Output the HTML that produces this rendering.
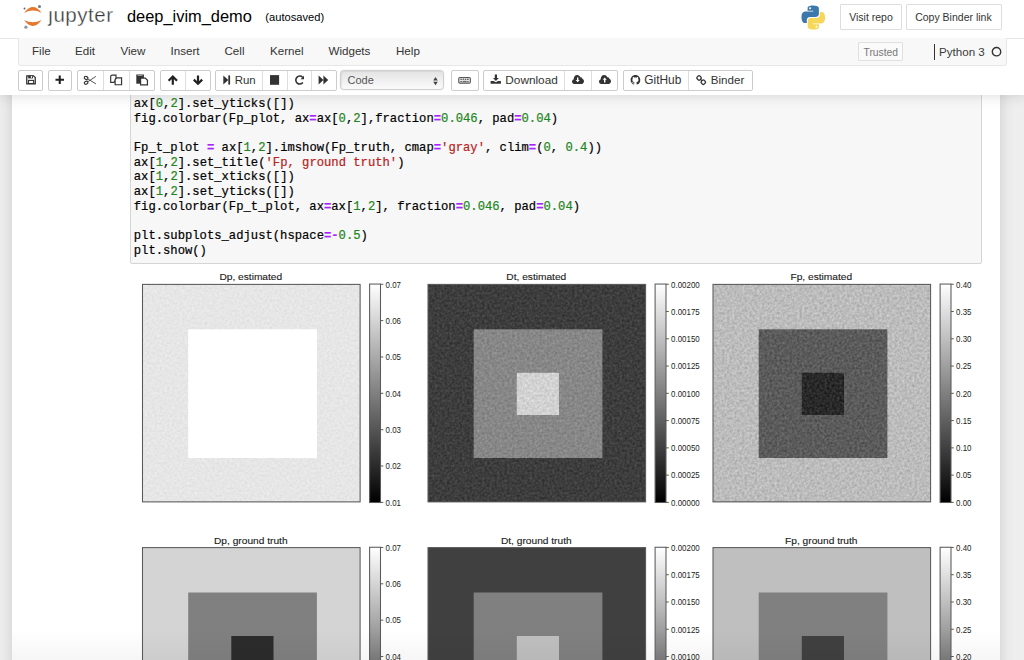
<!DOCTYPE html>
<html><head><meta charset="utf-8">
<style>
html,body{margin:0;padding:0}
body{width:1024px;height:660px;overflow:hidden;background:#fff;position:relative;font-family:"Liberation Sans",sans-serif;color:#333}
.a{position:absolute}
.t{position:absolute;white-space:pre;line-height:1}
.btn{position:absolute;box-sizing:border-box;border:1px solid #ccc;background:#fff;border-radius:2px;height:21px;top:70px}
.dv{position:absolute;top:0;bottom:0;width:1px;background:#ddd}
.ic{position:absolute;overflow:visible}
.code{position:absolute;left:133.8px;-webkit-text-stroke:0.2px currentColor;font-family:"Liberation Mono",monospace;font-size:12.2px;white-space:pre;color:#000;line-height:14.7px}
.n{color:#1d861d}.o{color:#a2f;font-weight:bold}.s{color:#ba2121}
.fr{position:absolute;box-sizing:border-box;border:1px solid #555;width:218px;height:218px}
.cb{position:absolute;box-sizing:border-box;border:1px solid #555;width:11.5px;height:218.6px;background:linear-gradient(#fff,#000)}
.ttl{position:absolute;font-size:10px;color:#111;white-space:pre;line-height:1;transform:translateX(-50%)}
.tk{position:absolute;font-size:8.3px;color:#222;white-space:pre;line-height:1}
.tm{position:absolute;width:3px;height:1px;background:#555}
</style></head><body>

<!-- ===== NOTEBOOK AREA ===== -->
<div class="a" style="left:0;top:95px;width:1024px;height:565px;background:#eee;overflow:hidden">
  <div class="a" style="left:12px;top:-20px;width:988px;height:700px;background:#fff;box-shadow:0 0 12px 1px rgba(87,87,87,0.2)"></div>
</div>

<!-- code cell -->
<div class="a" style="left:130px;top:60px;width:852px;height:203.5px;box-sizing:border-box;border:1px solid #d5d5d5;border-radius:2px;background:#f7f7f7"></div>

<div class="code" style="top:96.8px">ax[<span class="n">0</span>,<span class="n">2</span>].set_yticks([])
fig.colorbar(Fp_plot, ax<span class="o">=</span>ax[<span class="n">0</span>,<span class="n">2</span>],fraction<span class="o">=</span><span class="n">0.046</span>, pad<span class="o">=</span><span class="n">0.04</span>)

Fp_t_plot <span class="o">=</span> ax[<span class="n">1</span>,<span class="n">2</span>].imshow(Fp_truth, cmap<span class="o">=</span><span class="s">'gray'</span>, clim<span class="o">=</span>(<span class="n">0</span>, <span class="n">0.4</span>))
ax[<span class="n">1</span>,<span class="n">2</span>].set_title(<span class="s">'Fp, ground truth'</span>)
ax[<span class="n">1</span>,<span class="n">2</span>].set_xticks([])
ax[<span class="n">1</span>,<span class="n">2</span>].set_yticks([])
fig.colorbar(Fp_t_plot, ax<span class="o">=</span>ax[<span class="n">1</span>,<span class="n">2</span>], fraction<span class="o">=</span><span class="n">0.046</span>, pad<span class="o">=</span><span class="n">0.04</span>)

plt.subplots_adjust(hspace<span class="o">=-</span><span class="n">0.5</span>)
plt.show()</div>
<div class="a" style="left:0;top:0;width:1024px;height:95px;background:#fff;box-shadow:0 0 12px 1px rgba(87,87,87,0.2)">
<!-- ===== HEADER ===== -->
<svg class="ic" style="left:0;top:0" width="50" height="35" viewBox="0 0 50 35">
  <path d="M24.1 12.9Q32.85 1.1 41.6 12.9Q32.85 8.1 24.1 12.9Z" fill="#e8772e"/>
  <path d="M24.1 20Q32.85 31.8 41.6 20Q32.85 24.4 24.1 20Z" fill="#e8772e"/>
  <circle cx="39.5" cy="6.5" r="1.5" fill="#767677"/>
  <circle cx="24.5" cy="8.6" r="1.0" fill="#616262"/>
  <circle cx="25.9" cy="27.2" r="1.6" fill="#989798"/>
</svg>
<div class="t" style="left:48.3px;top:5px;font-size:20.5px;color:#3a3a3a;letter-spacing:0.53px;-webkit-text-stroke:0.3px #fff">ȷupyter</div>
<div class="t" style="left:127px;top:8.2px;font-size:16.4px;color:#000">deep_ivim_demo</div>
<div class="t" style="left:265.3px;top:12.4px;font-size:11.15px;color:#000">(autosaved)</div>

<svg class="ic" style="left:801px;top:5px" width="25" height="25" viewBox="0 0 25 25">
  <path d="M12.2 0.5c-6 0-5.6 2.6-5.6 2.6v2.7h5.7v0.8H4.3S0.5 6.2 0.5 12.2s3.3 5.8 3.3 5.8h2v-2.8s-0.1-3.3 3.3-3.3h5.6s3.2 0.1 3.2-3.1V3.6S18.4 0.5 12.2 0.5zM9.1 2.3c0.6 0 1 0.5 1 1s-0.5 1-1 1-1-0.5-1-1 0.5-1 1-1z" fill="#3d78ac"/>
  <path d="M12.4 24.5c6 0 5.6-2.6 5.6-2.6v-2.7h-5.7v-0.8h8S24.1 18.8 24.1 12.8s-3.3-5.8-3.3-5.8h-2v2.8s0.1 3.3-3.3 3.3H9.9s-3.2-0.1-3.2 3.1v5.2S6.2 24.5 12.4 24.5zM15.5 22.7c-0.6 0-1-0.5-1-1s0.5-1 1-1 1 0.5 1 1-0.5 1-1 1z" fill="#f7d75a"/>
</svg>
<div class="a" style="left:840px;top:4px;width:62px;height:26px;box-sizing:border-box;border:1px solid #ddd;border-radius:1px;background:#fff"></div>
<div class="t" style="left:849.2px;top:11.7px;font-size:10.5px;color:#333">Visit repo</div>
<div class="a" style="left:906px;top:4px;width:96px;height:26px;box-sizing:border-box;border:1px solid #ddd;border-radius:1px;background:#fff"></div>
<div class="t" style="left:915.2px;top:11.7px;font-size:10.5px;color:#333">Copy Binder link</div>

<!-- ===== MENUBAR ===== -->
<div class="a" style="left:0;top:38px;width:1024px;height:1px;background:#e7e7e7"></div>
<div class="a" style="left:18px;top:38px;width:989px;height:27.5px;box-sizing:border-box;border:1px solid #e7e7e7;border-top:none;background:#f8f8f8;border-radius:0 0 3px 3px"></div>
<div class="t" style="left:32px;top:45.4px;font-size:11.6px;color:#333">File</div>
<div class="t" style="left:75px;top:45.4px;font-size:11.6px;color:#333">Edit</div>
<div class="t" style="left:120.5px;top:45.4px;font-size:11.6px;color:#333">View</div>
<div class="t" style="left:170.5px;top:45.4px;font-size:11.6px;color:#333">Insert</div>
<div class="t" style="left:224.5px;top:45.4px;font-size:11.6px;color:#333">Cell</div>
<div class="t" style="left:270px;top:45.4px;font-size:11.6px;color:#333">Kernel</div>
<div class="t" style="left:328.5px;top:45.4px;font-size:11.6px;color:#333">Widgets</div>
<div class="t" style="left:396px;top:45.4px;font-size:11.6px;color:#333">Help</div>
<div class="a" style="left:858px;top:42.4px;width:45px;height:19px;box-sizing:border-box;border:1px solid #e0e0e0;border-radius:1px;background:#fafafa"></div>
<div class="t" style="left:863.5px;top:47.5px;font-size:10.3px;color:#777">Trusted</div>
<div class="a" style="left:934px;top:44px;width:1.2px;height:15.5px;background:#333"></div>
<div class="t" style="left:939px;top:45.6px;font-size:11.6px;color:#3a3a3a">Python 3</div>
<svg class="ic" style="left:990px;top:46px" width="12" height="12"><circle cx="6.5" cy="5.7" r="4.2" fill="none" stroke="#333" stroke-width="1.4"/></svg>

<!-- ===== TOOLBAR ===== -->
<div class="btn" style="left:18px;width:25px"></div>
<div class="btn" style="left:48px;width:24px"></div>
<div class="btn" style="left:77px;width:78px"><div class="dv" style="left:25px"></div><div class="dv" style="left:51px"></div></div>
<div class="btn" style="left:160px;width:51px"><div class="dv" style="left:24px"></div></div>
<div class="btn" style="left:215px;width:122px"><div class="dv" style="left:46px"></div><div class="dv" style="left:71px"></div><div class="dv" style="left:95px"></div></div>
<div class="a" style="left:340px;top:70.3px;width:103.5px;height:20.2px;box-sizing:border-box;border:1px solid #d0d0d0;border-radius:4px;background:linear-gradient(#e4e4e4,#fafafa);box-shadow:0 0 1px rgba(0,0,0,0.25),inset 1px 1px 1px rgba(0,0,0,0.06)"></div>
<div class="t" style="left:347.5px;top:75px;font-size:11px;color:#555">Code</div>
<svg class="ic" style="left:431.5px;top:75.5px" width="8" height="11"><path d="M1.2 4.4 L3.5 1 L5.8 4.4Z M1.2 5.8 L3.5 9.3 L5.8 5.8Z" fill="#444"/></svg>
<div class="btn" style="left:451px;width:28px"></div>
<div class="btn" style="left:483.3px;width:135px"><div class="dv" style="left:80px"></div><div class="dv" style="left:107px"></div></div>
<div class="btn" style="left:623px;width:130px"><div class="dv" style="left:64px"></div></div>

<!-- icons -->
<svg class="ic" style="left:0;top:0" width="760" height="95" viewBox="0 0 760 95">
<g fill="none" stroke="#333">
  <path d="M26.75 75.85H33.5L35.25 77.6V83.95H26.75Z" stroke-width="1.3"/>
  <rect x="28.5" y="80.4" width="5.1" height="3.1" fill="#fff" stroke-width="1.1"/>
</g>
<rect x="28.2" y="75.5" width="4.8" height="2.9" fill="#333"/><rect x="30.9" y="76.1" width="1.2" height="1.7" fill="#fff"/>
<path d="M59.75 75.4V84M55.5 79.7H64" stroke="#222" stroke-width="2.1"/>
<g fill="none" stroke="#333" stroke-width="1.15">
  <ellipse cx="86.1" cy="77.9" rx="1.9" ry="1.45" transform="rotate(28 86.1 77.9)"/>
  <ellipse cx="86.1" cy="82.7" rx="1.9" ry="1.45" transform="rotate(-28 86.1 82.7)"/>
</g>
<path d="M87.9 78.9L95.9 83.9M87.9 81.7L95.9 76.4" stroke="#555" stroke-width="1"/>
<path d="M112.1 75.1H116V79.6L113.9 82.3H110.7V76.5Q110.7 75.1 112.1 75.1Z" fill="#fff" stroke="#333" stroke-width="1.15"/>
<path d="M116.8 77.9H121.55V84.75H115.1V79.6Z" fill="#fff" stroke="#333" stroke-width="1.2"/>
<rect x="136.3" y="74.5" width="7.6" height="9.2" fill="#333"/><rect x="137.6" y="74.9" width="4.9" height="1.1" fill="#999"/>
<path d="M140.6 78.1H145.3L147.45 80.25V84.9H140.6Z" fill="#fff" stroke="#333" stroke-width="1.2"/>
<path d="M172.8 84.8V77.6M168.6 80.7L172.8 76.5L177 80.7" fill="none" stroke="#222" stroke-width="2.2"/>
<path d="M198 75.5V82.7M193.8 79.6L198 83.8L202.2 79.6" fill="none" stroke="#222" stroke-width="2.2"/>
<path d="M223.3 75.4L228.4 80L223.3 84.6Z" fill="#333"/><rect x="228.3" y="75.4" width="1.8" height="9.2" fill="#333"/>
<rect x="270" y="75.1" width="9.1" height="9.7" fill="#333"/>
<path d="M302.6 77.2A4 4 0 1 0 302.9 82.6" fill="none" stroke="#333" stroke-width="1.6"/>
<path d="M304 75.7V79.2H300.5Z" fill="#333"/>
<path d="M318.6 75.5L323.4 80L318.6 84.4ZM323.4 75.5L328.2 80L323.4 84.4Z" fill="#333"/>
<rect x="458.8" y="77.5" width="11.5" height="5.7" rx="1.1" fill="none" stroke="#555" stroke-width="1.2"/>
<path d="M460.3 78.6h1.6v1.5h-1.6zM462.5 78.6h1.6v1.5h-1.6zM464.7 78.6h1.6v1.5h-1.6zM466.9 78.6h1.8v1.5h-1.8zM460.3 80.7h1.6v1.5h-1.6zM462.5 80.7h4.2v1.5h-4.2zM467.2 80.7h1.5v1.5h-1.5z" fill="#666"/>
<path d="M494.8 74.4H497V77.9H498.8L495.9 81L493 77.9H494.8Z" fill="#333"/>
<path d="M490.6 81H493.8L495.9 82.2L498 81H500.9V83.8H490.6Z" fill="#333"/>
<path d="M574.3 83.9C572.9 83.9 572 83 572 81.6C572 80.5 572.7 79.6 573.6 79.4C573.7 77.1 575.1 75.1 577.1 75.1C578.6 75.1 579.7 76 580.2 77.2C581 76.9 582.3 77.6 582.5 78.9C583.5 79.2 584 80.3 584 81.3C584 82.8 583 83.9 581.6 83.9Z" fill="#333"/>
<path d="M577 77.4H578.4V80H579.7L577.7 82.3L575.7 80H577Z" fill="#fff"/>
<path d="M601.3 83.9C599.9 83.9 599 83 599 81.6C599 80.5 599.7 79.6 600.6 79.4C600.7 77.1 602.1 75.1 604.1 75.1C605.6 75.1 606.7 76 607.2 77.2C608 76.9 609.3 77.6 609.5 78.9C610.5 79.2 611 80.3 611 81.3C611 82.8 610 83.9 608.6 83.9Z" fill="#333"/>
<path d="M604 82.4H605.4V79.8H606.7L604.7 77.4L602.7 79.8H604Z" fill="#fff"/>
<g transform="translate(630.6 75.1) scale(0.605)"><path d="M8 0C3.58 0 0 3.58 0 8c0 3.54 2.29 6.53 5.47 7.59.4.07.55-.17.55-.38 0-.19-.01-.82-.01-1.49-2.01.37-2.53-.49-2.69-.94-.09-.23-.48-.94-.82-1.13-.28-.15-.68-.52-.01-.53.63-.01 1.08.58 1.23.82.72 1.21 1.87.87 2.33.66.07-.52.28-.87.51-1.07-1.78-.2-3.64-.89-3.64-3.95 0-.87.31-1.59.82-2.15-.08-.2-.36-1.02.08-2.12 0 0 .67-.21 2.2.82.64-.18 1.32-.27 2-.27.68 0 1.36.09 2 .27 1.53-1.04 2.2-.82 2.2-.82.44 1.1.16 1.92.08 2.12.51.56.82 1.27.82 2.15 0 3.07-1.87 3.75-3.65 3.95.29.25.54.73.54 1.48 0 1.07-.01 1.93-.01 2.2 0 .21.15.46.55.38A8.013 8.013 0 0016 8c0-4.42-3.58-8-8-8z" fill="#333"/></g>
<g fill="none" stroke="#333" stroke-width="1.3">
  <rect x="697.1" y="76" width="3.9" height="3.9" rx="1.2" transform="rotate(45 699.05 77.95)"/>
  <rect x="701.35" y="80.25" width="3.9" height="3.9" rx="1.2" transform="rotate(45 703.3 82.2)"/>
  <path d="M700.4 79.3L702 80.9"/>
</g>
</svg>
<div class="t" style="left:234.8px;top:75px;font-size:11.4px;color:#333">Run</div>
<div class="t" style="left:505.3px;top:74.8px;font-size:11.8px;color:#333">Download</div>
<div class="t" style="left:644.3px;top:74.8px;font-size:11.9px;color:#333">GitHub</div>
<div class="t" style="left:710.8px;top:74.2px;font-size:11.6px;color:#333">Binder</div>


</div>
<div id="out"><svg class="a" style="left:0;top:0" width="1024" height="660" viewBox="0 0 1024 660"><defs><linearGradient id="g" x1="0" y1="0" x2="0" y2="1"><stop offset="0" stop-color="#fff"/><stop offset="1" stop-color="#000"/></linearGradient><filter id="nz0" x="0" y="0" width="1" height="1" color-interpolation-filters="sRGB"><feTurbulence type="fractalNoise" baseFrequency="0.4" numOctaves="2" seed="7" result="t"/><feColorMatrix in="t" type="matrix" values="1 0 0 0 0  1 0 0 0 0  1 0 0 0 0  0 0 0 0 1" result="g"/><feComposite in="SourceGraphic" in2="g" operator="arithmetic" k1="0" k2="1" k3="0.09" k4="-0.045"/></filter><filter id="nz1" x="0" y="0" width="1" height="1" color-interpolation-filters="sRGB"><feTurbulence type="fractalNoise" baseFrequency="0.4" numOctaves="2" seed="8" result="t"/><feColorMatrix in="t" type="matrix" values="1 0 0 0 0  1 0 0 0 0  1 0 0 0 0  0 0 0 0 1" result="g"/><feComposite in="SourceGraphic" in2="g" operator="arithmetic" k1="0" k2="1" k3="0.2" k4="-0.1"/></filter><filter id="nz2" x="0" y="0" width="1" height="1" color-interpolation-filters="sRGB"><feTurbulence type="fractalNoise" baseFrequency="0.4" numOctaves="2" seed="9" result="t"/><feColorMatrix in="t" type="matrix" values="1 0 0 0 0  1 0 0 0 0  1 0 0 0 0  0 0 0 0 1" result="g"/><feComposite in="SourceGraphic" in2="g" operator="arithmetic" k1="0" k2="1" k3="0.24" k4="-0.12"/></filter></defs>
<g font-family="Liberation Sans" fill="#222">
<g filter="url(#nz0)"><rect x="142.5" y="284.4" width="217.60" height="217.50" fill="#e6e6e6"/>
</g>
<rect x="188.2" y="329.3" width="128.70" height="128.70" fill="#ffffff"/>
<rect x="142.5" y="284.4" width="217.60" height="217.50" fill="none" stroke="#5a5a5a" stroke-width="1.05"/>
<text x="250.8" y="280.5" font-size="9.8" text-anchor="middle" fill="#1a1a1a" stroke="#1a1a1a" stroke-width="0.12" transform="translate(250.8 0) scale(1.04 1) translate(-250.8 0)">Dp, estimated</text>
<rect x="369.6" y="284.05" width="10.90" height="218.45" fill="url(#g)" stroke="#5a5a5a" stroke-width="1.05"/>
<path d="M380.5 284.25H383.3" stroke="#5a5a5a" stroke-width="1"/>
<text x="385.6" y="287.55" font-size="9.2" transform="translate(385.6 0) scale(0.86 1) translate(-385.6 0)">0.07</text>
<path d="M380.5 320.61H383.3" stroke="#5a5a5a" stroke-width="1"/>
<text x="385.6" y="323.91" font-size="9.2" transform="translate(385.6 0) scale(0.86 1) translate(-385.6 0)">0.06</text>
<path d="M380.5 356.97H383.3" stroke="#5a5a5a" stroke-width="1"/>
<text x="385.6" y="360.27" font-size="9.2" transform="translate(385.6 0) scale(0.86 1) translate(-385.6 0)">0.05</text>
<path d="M380.5 393.32H383.3" stroke="#5a5a5a" stroke-width="1"/>
<text x="385.6" y="396.62" font-size="9.2" transform="translate(385.6 0) scale(0.86 1) translate(-385.6 0)">0.04</text>
<path d="M380.5 429.68H383.3" stroke="#5a5a5a" stroke-width="1"/>
<text x="385.6" y="432.98" font-size="9.2" transform="translate(385.6 0) scale(0.86 1) translate(-385.6 0)">0.03</text>
<path d="M380.5 466.04H383.3" stroke="#5a5a5a" stroke-width="1"/>
<text x="385.6" y="469.34" font-size="9.2" transform="translate(385.6 0) scale(0.86 1) translate(-385.6 0)">0.02</text>
<path d="M380.5 502.40H383.3" stroke="#5a5a5a" stroke-width="1"/>
<text x="385.6" y="505.70" font-size="9.2" transform="translate(385.6 0) scale(0.86 1) translate(-385.6 0)">0.01</text>
<g filter="url(#nz1)"><rect x="428.0" y="284.4" width="217.60" height="217.50" fill="#3d3d3d"/>
<rect x="473.7" y="329.3" width="128.70" height="128.70" fill="#878787"/>
<rect x="516.8" y="372.8" width="42.20" height="42.20" fill="#d2d2d2"/>
</g>
<rect x="428.0" y="284.4" width="217.60" height="217.50" fill="none" stroke="#5a5a5a" stroke-width="1.05"/>
<text x="536.3" y="280.5" font-size="9.8" text-anchor="middle" fill="#1a1a1a" stroke="#1a1a1a" stroke-width="0.12" transform="translate(536.3 0) scale(1.04 1) translate(-536.3 0)">Dt, estimated</text>
<rect x="655.1" y="284.05" width="10.90" height="218.45" fill="url(#g)" stroke="#5a5a5a" stroke-width="1.05"/>
<path d="M666.0 284.25H668.8" stroke="#5a5a5a" stroke-width="1"/>
<text x="671.1" y="287.55" font-size="9.2" transform="translate(671.1 0) scale(0.86 1) translate(-671.1 0)">0.00200</text>
<path d="M666.0 311.52H668.8" stroke="#5a5a5a" stroke-width="1"/>
<text x="671.1" y="314.82" font-size="9.2" transform="translate(671.1 0) scale(0.86 1) translate(-671.1 0)">0.00175</text>
<path d="M666.0 338.79H668.8" stroke="#5a5a5a" stroke-width="1"/>
<text x="671.1" y="342.09" font-size="9.2" transform="translate(671.1 0) scale(0.86 1) translate(-671.1 0)">0.00150</text>
<path d="M666.0 366.06H668.8" stroke="#5a5a5a" stroke-width="1"/>
<text x="671.1" y="369.36" font-size="9.2" transform="translate(671.1 0) scale(0.86 1) translate(-671.1 0)">0.00125</text>
<path d="M666.0 393.32H668.8" stroke="#5a5a5a" stroke-width="1"/>
<text x="671.1" y="396.62" font-size="9.2" transform="translate(671.1 0) scale(0.86 1) translate(-671.1 0)">0.00100</text>
<path d="M666.0 420.59H668.8" stroke="#5a5a5a" stroke-width="1"/>
<text x="671.1" y="423.89" font-size="9.2" transform="translate(671.1 0) scale(0.86 1) translate(-671.1 0)">0.00075</text>
<path d="M666.0 447.86H668.8" stroke="#5a5a5a" stroke-width="1"/>
<text x="671.1" y="451.16" font-size="9.2" transform="translate(671.1 0) scale(0.86 1) translate(-671.1 0)">0.00050</text>
<path d="M666.0 475.13H668.8" stroke="#5a5a5a" stroke-width="1"/>
<text x="671.1" y="478.43" font-size="9.2" transform="translate(671.1 0) scale(0.86 1) translate(-671.1 0)">0.00025</text>
<path d="M666.0 502.40H668.8" stroke="#5a5a5a" stroke-width="1"/>
<text x="671.1" y="505.70" font-size="9.2" transform="translate(671.1 0) scale(0.86 1) translate(-671.1 0)">0.00000</text>
<g filter="url(#nz2)"><rect x="713.0" y="284.4" width="217.60" height="217.50" fill="#bcbcbc"/>
<rect x="758.7" y="329.3" width="128.70" height="128.70" fill="#5b5b5b"/>
<rect x="801.8" y="372.8" width="42.20" height="42.20" fill="#292929"/>
</g>
<rect x="713.0" y="284.4" width="217.60" height="217.50" fill="none" stroke="#5a5a5a" stroke-width="1.05"/>
<text x="821.3" y="280.5" font-size="9.8" text-anchor="middle" fill="#1a1a1a" stroke="#1a1a1a" stroke-width="0.12" transform="translate(821.3 0) scale(1.04 1) translate(-821.3 0)">Fp, estimated</text>
<rect x="940.1" y="284.05" width="10.90" height="218.45" fill="url(#g)" stroke="#5a5a5a" stroke-width="1.05"/>
<path d="M951.0 284.25H953.8" stroke="#5a5a5a" stroke-width="1"/>
<text x="956.1" y="287.55" font-size="9.2" transform="translate(956.1 0) scale(0.86 1) translate(-956.1 0)">0.40</text>
<path d="M951.0 311.52H953.8" stroke="#5a5a5a" stroke-width="1"/>
<text x="956.1" y="314.82" font-size="9.2" transform="translate(956.1 0) scale(0.86 1) translate(-956.1 0)">0.35</text>
<path d="M951.0 338.79H953.8" stroke="#5a5a5a" stroke-width="1"/>
<text x="956.1" y="342.09" font-size="9.2" transform="translate(956.1 0) scale(0.86 1) translate(-956.1 0)">0.30</text>
<path d="M951.0 366.06H953.8" stroke="#5a5a5a" stroke-width="1"/>
<text x="956.1" y="369.36" font-size="9.2" transform="translate(956.1 0) scale(0.86 1) translate(-956.1 0)">0.25</text>
<path d="M951.0 393.32H953.8" stroke="#5a5a5a" stroke-width="1"/>
<text x="956.1" y="396.62" font-size="9.2" transform="translate(956.1 0) scale(0.86 1) translate(-956.1 0)">0.20</text>
<path d="M951.0 420.59H953.8" stroke="#5a5a5a" stroke-width="1"/>
<text x="956.1" y="423.89" font-size="9.2" transform="translate(956.1 0) scale(0.86 1) translate(-956.1 0)">0.15</text>
<path d="M951.0 447.86H953.8" stroke="#5a5a5a" stroke-width="1"/>
<text x="956.1" y="451.16" font-size="9.2" transform="translate(956.1 0) scale(0.86 1) translate(-956.1 0)">0.10</text>
<path d="M951.0 475.13H953.8" stroke="#5a5a5a" stroke-width="1"/>
<text x="956.1" y="478.43" font-size="9.2" transform="translate(956.1 0) scale(0.86 1) translate(-956.1 0)">0.05</text>
<path d="M951.0 502.40H953.8" stroke="#5a5a5a" stroke-width="1"/>
<text x="956.1" y="505.70" font-size="9.2" transform="translate(956.1 0) scale(0.86 1) translate(-956.1 0)">0.00</text>
<g><rect x="142.5" y="547.6" width="217.60" height="217.50" fill="#d4d4d4"/>
<rect x="188.2" y="592.5" width="128.70" height="128.70" fill="#808080"/>
<rect x="231.3" y="636.0" width="42.20" height="42.20" fill="#2b2b2b"/>
</g>
<rect x="142.5" y="547.6" width="217.60" height="217.50" fill="none" stroke="#5a5a5a" stroke-width="1.05"/>
<text x="250.8" y="543.7" font-size="9.8" text-anchor="middle" fill="#1a1a1a" stroke="#1a1a1a" stroke-width="0.12" transform="translate(250.8 0) scale(1.04 1) translate(-250.8 0)">Dp, ground truth</text>
<rect x="369.6" y="547.25" width="10.90" height="218.45" fill="url(#g)" stroke="#5a5a5a" stroke-width="1.05"/>
<path d="M380.5 547.45H383.3" stroke="#5a5a5a" stroke-width="1"/>
<text x="385.6" y="550.75" font-size="9.2" transform="translate(385.6 0) scale(0.86 1) translate(-385.6 0)">0.07</text>
<path d="M380.5 583.81H383.3" stroke="#5a5a5a" stroke-width="1"/>
<text x="385.6" y="587.11" font-size="9.2" transform="translate(385.6 0) scale(0.86 1) translate(-385.6 0)">0.06</text>
<path d="M380.5 620.17H383.3" stroke="#5a5a5a" stroke-width="1"/>
<text x="385.6" y="623.47" font-size="9.2" transform="translate(385.6 0) scale(0.86 1) translate(-385.6 0)">0.05</text>
<path d="M380.5 656.52H383.3" stroke="#5a5a5a" stroke-width="1"/>
<text x="385.6" y="659.83" font-size="9.2" transform="translate(385.6 0) scale(0.86 1) translate(-385.6 0)">0.04</text>
<path d="M380.5 692.88H383.3" stroke="#5a5a5a" stroke-width="1"/>
<text x="385.6" y="696.18" font-size="9.2" transform="translate(385.6 0) scale(0.86 1) translate(-385.6 0)">0.03</text>
<path d="M380.5 729.24H383.3" stroke="#5a5a5a" stroke-width="1"/>
<text x="385.6" y="732.54" font-size="9.2" transform="translate(385.6 0) scale(0.86 1) translate(-385.6 0)">0.02</text>
<path d="M380.5 765.60H383.3" stroke="#5a5a5a" stroke-width="1"/>
<text x="385.6" y="768.90" font-size="9.2" transform="translate(385.6 0) scale(0.86 1) translate(-385.6 0)">0.01</text>
<g><rect x="428.0" y="547.6" width="217.60" height="217.50" fill="#404040"/>
<rect x="473.7" y="592.5" width="128.70" height="128.70" fill="#808080"/>
<rect x="516.8" y="636.0" width="42.20" height="42.20" fill="#bfbfbf"/>
</g>
<rect x="428.0" y="547.6" width="217.60" height="217.50" fill="none" stroke="#5a5a5a" stroke-width="1.05"/>
<text x="536.3" y="543.7" font-size="9.8" text-anchor="middle" fill="#1a1a1a" stroke="#1a1a1a" stroke-width="0.12" transform="translate(536.3 0) scale(1.04 1) translate(-536.3 0)">Dt, ground truth</text>
<rect x="655.1" y="547.25" width="10.90" height="218.45" fill="url(#g)" stroke="#5a5a5a" stroke-width="1.05"/>
<path d="M666.0 547.45H668.8" stroke="#5a5a5a" stroke-width="1"/>
<text x="671.1" y="550.75" font-size="9.2" transform="translate(671.1 0) scale(0.86 1) translate(-671.1 0)">0.00200</text>
<path d="M666.0 574.72H668.8" stroke="#5a5a5a" stroke-width="1"/>
<text x="671.1" y="578.02" font-size="9.2" transform="translate(671.1 0) scale(0.86 1) translate(-671.1 0)">0.00175</text>
<path d="M666.0 601.99H668.8" stroke="#5a5a5a" stroke-width="1"/>
<text x="671.1" y="605.29" font-size="9.2" transform="translate(671.1 0) scale(0.86 1) translate(-671.1 0)">0.00150</text>
<path d="M666.0 629.26H668.8" stroke="#5a5a5a" stroke-width="1"/>
<text x="671.1" y="632.56" font-size="9.2" transform="translate(671.1 0) scale(0.86 1) translate(-671.1 0)">0.00125</text>
<path d="M666.0 656.52H668.8" stroke="#5a5a5a" stroke-width="1"/>
<text x="671.1" y="659.83" font-size="9.2" transform="translate(671.1 0) scale(0.86 1) translate(-671.1 0)">0.00100</text>
<path d="M666.0 683.79H668.8" stroke="#5a5a5a" stroke-width="1"/>
<text x="671.1" y="687.09" font-size="9.2" transform="translate(671.1 0) scale(0.86 1) translate(-671.1 0)">0.00075</text>
<path d="M666.0 711.06H668.8" stroke="#5a5a5a" stroke-width="1"/>
<text x="671.1" y="714.36" font-size="9.2" transform="translate(671.1 0) scale(0.86 1) translate(-671.1 0)">0.00050</text>
<path d="M666.0 738.33H668.8" stroke="#5a5a5a" stroke-width="1"/>
<text x="671.1" y="741.63" font-size="9.2" transform="translate(671.1 0) scale(0.86 1) translate(-671.1 0)">0.00025</text>
<path d="M666.0 765.60H668.8" stroke="#5a5a5a" stroke-width="1"/>
<text x="671.1" y="768.90" font-size="9.2" transform="translate(671.1 0) scale(0.86 1) translate(-671.1 0)">0.00000</text>
<g><rect x="713.0" y="547.6" width="217.60" height="217.50" fill="#bfbfbf"/>
<rect x="758.7" y="592.5" width="128.70" height="128.70" fill="#808080"/>
<rect x="801.8" y="636.0" width="42.20" height="42.20" fill="#404040"/>
</g>
<rect x="713.0" y="547.6" width="217.60" height="217.50" fill="none" stroke="#5a5a5a" stroke-width="1.05"/>
<text x="821.3" y="543.7" font-size="9.8" text-anchor="middle" fill="#1a1a1a" stroke="#1a1a1a" stroke-width="0.12" transform="translate(821.3 0) scale(1.04 1) translate(-821.3 0)">Fp, ground truth</text>
<rect x="940.1" y="547.25" width="10.90" height="218.45" fill="url(#g)" stroke="#5a5a5a" stroke-width="1.05"/>
<path d="M951.0 547.45H953.8" stroke="#5a5a5a" stroke-width="1"/>
<text x="956.1" y="550.75" font-size="9.2" transform="translate(956.1 0) scale(0.86 1) translate(-956.1 0)">0.40</text>
<path d="M951.0 574.72H953.8" stroke="#5a5a5a" stroke-width="1"/>
<text x="956.1" y="578.02" font-size="9.2" transform="translate(956.1 0) scale(0.86 1) translate(-956.1 0)">0.35</text>
<path d="M951.0 601.99H953.8" stroke="#5a5a5a" stroke-width="1"/>
<text x="956.1" y="605.29" font-size="9.2" transform="translate(956.1 0) scale(0.86 1) translate(-956.1 0)">0.30</text>
<path d="M951.0 629.26H953.8" stroke="#5a5a5a" stroke-width="1"/>
<text x="956.1" y="632.56" font-size="9.2" transform="translate(956.1 0) scale(0.86 1) translate(-956.1 0)">0.25</text>
<path d="M951.0 656.52H953.8" stroke="#5a5a5a" stroke-width="1"/>
<text x="956.1" y="659.83" font-size="9.2" transform="translate(956.1 0) scale(0.86 1) translate(-956.1 0)">0.20</text>
<path d="M951.0 683.79H953.8" stroke="#5a5a5a" stroke-width="1"/>
<text x="956.1" y="687.09" font-size="9.2" transform="translate(956.1 0) scale(0.86 1) translate(-956.1 0)">0.15</text>
<path d="M951.0 711.06H953.8" stroke="#5a5a5a" stroke-width="1"/>
<text x="956.1" y="714.36" font-size="9.2" transform="translate(956.1 0) scale(0.86 1) translate(-956.1 0)">0.10</text>
<path d="M951.0 738.33H953.8" stroke="#5a5a5a" stroke-width="1"/>
<text x="956.1" y="741.63" font-size="9.2" transform="translate(956.1 0) scale(0.86 1) translate(-956.1 0)">0.05</text>
<path d="M951.0 765.60H953.8" stroke="#5a5a5a" stroke-width="1"/>
<text x="956.1" y="768.90" font-size="9.2" transform="translate(956.1 0) scale(0.86 1) translate(-956.1 0)">0.00</text>
</g></svg></div><!--/out-->
<div class="a" style="left:12px;top:628px;width:988px;height:32px;background:linear-gradient(rgba(0,0,0,0),rgba(0,0,0,0.035))"></div>
</body></html>
